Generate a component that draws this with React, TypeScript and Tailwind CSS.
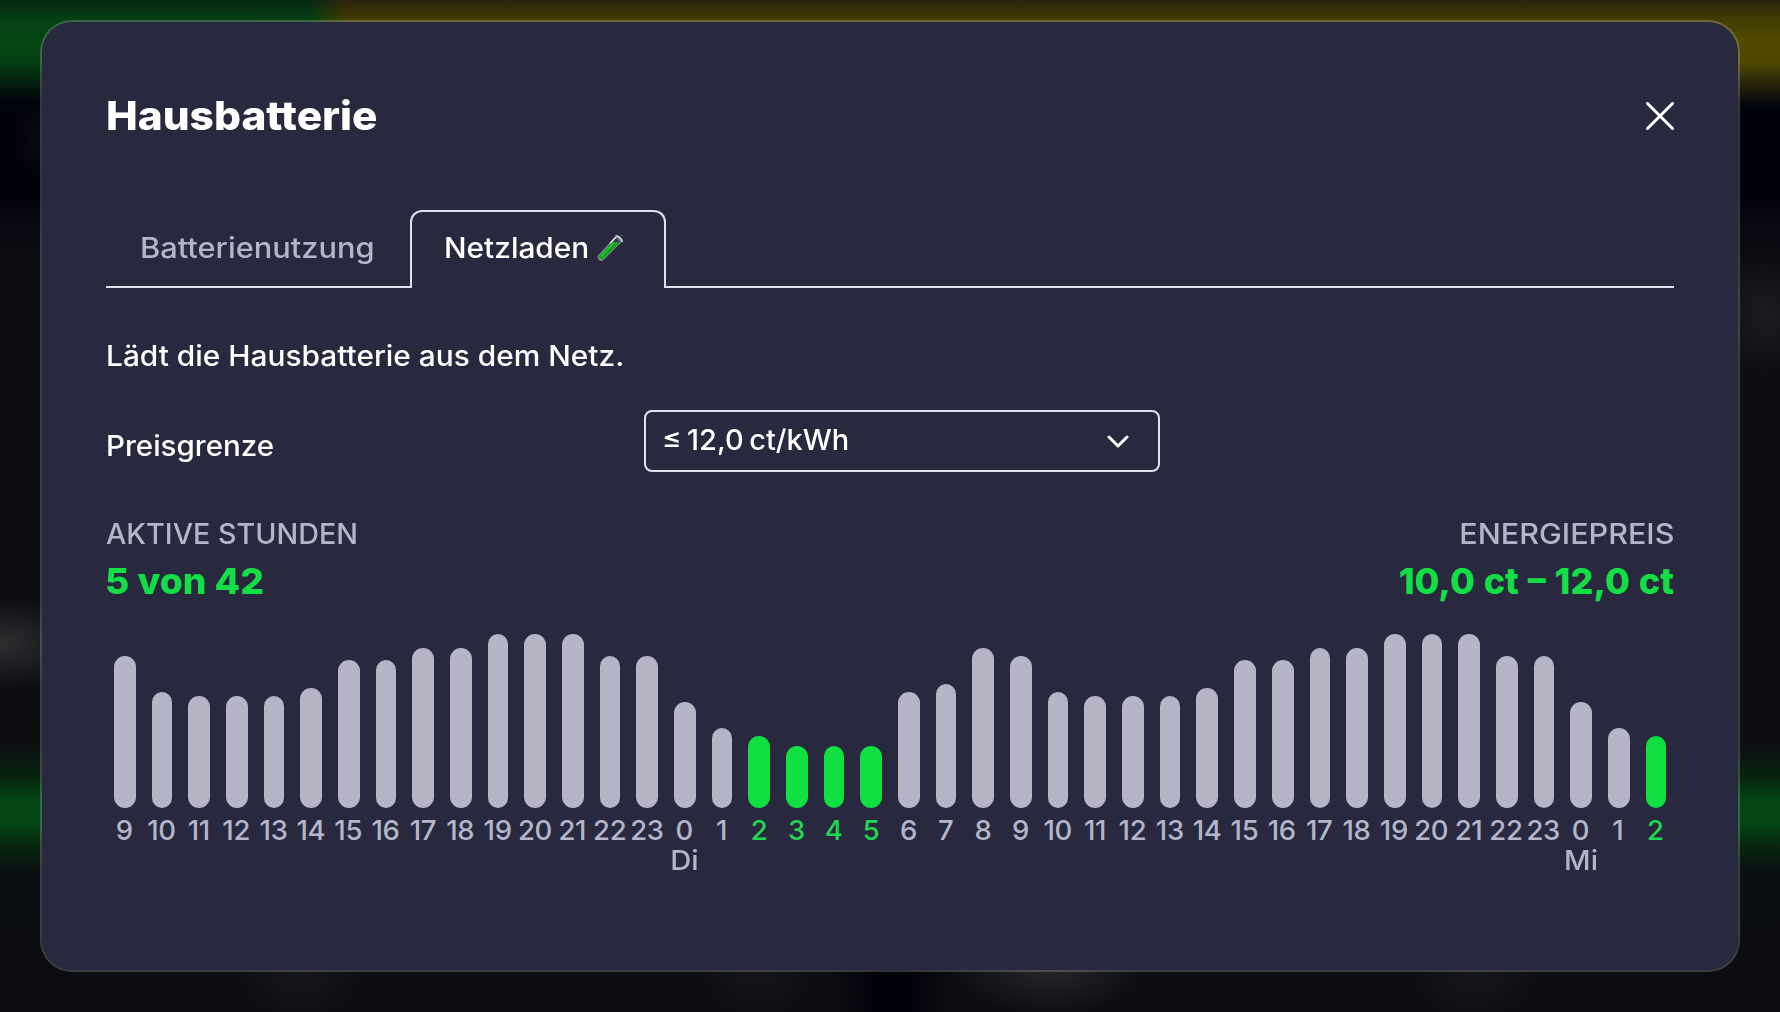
type Slot = { hour: number; height: number; active?: boolean; day?: string };

const COLUMN_WIDTH = 37.34375;

const day = [
  { hour: 9, height: 152 },
  { hour: 10, height: 116 },
  { hour: 11, height: 112 },
  { hour: 12, height: 112 },
  { hour: 13, height: 112 },
  { hour: 14, height: 120 },
  { hour: 15, height: 148 },
  { hour: 16, height: 148 },
  { hour: 17, height: 160 },
  { hour: 18, height: 160 },
  { hour: 19, height: 174 },
  { hour: 20, height: 174 },
  { hour: 21, height: 174 },
  { hour: 22, height: 152 },
  { hour: 23, height: 152 },
];

const slots: Slot[] = [
  ...day,
  { hour: 0, height: 106, day: "Di" },
  { hour: 1, height: 80 },
  { hour: 2, height: 72, active: true },
  { hour: 3, height: 62, active: true },
  { hour: 4, height: 62, active: true },
  { hour: 5, height: 62, active: true },
  { hour: 6, height: 116 },
  { hour: 7, height: 124 },
  { hour: 8, height: 160 },
  ...day,
  { hour: 0, height: 106, day: "Mi" },
  { hour: 1, height: 80 },
  { hour: 2, height: 72, active: true },
];

// Bars snap to a 2px grid so that their edges stay crisp.
const snap = (v: number) => Math.round(v / 2) * 2;

function barBox(i: number) {
  const left = snap(i * COLUMN_WIDTH + 8);
  const right = snap((i + 1) * COLUMN_WIDTH - 8);
  return { marginLeft: left - i * COLUMN_WIDTH, width: right - left };
}

function TestTube() {
  return (
    <svg width="28" height="28" viewBox="0 0 28 28" fill="none">
      <path d="M19 2 25 7.4 7 25.6a3.6 3.6 0 0 1-5.2-5Z" fill="#7f8f8c" />
      <path d="M19.4 4 23.4 7.6 6.4 24.4a2.3 2.3 0 0 1-3.4-3.2Z" fill="#3a3d48" />
      <path d="M15.6 8h7.2L6.4 24.4a2.3 2.3 0 0 1-3.4-3.2Z" fill="#0ea816" />
      <path d="M16 9.4 4.4 21.8" stroke="#2fd03c" strokeWidth="1.2" strokeLinecap="round" />
      <path d="M19.2 1.8c2.4.6 5 2.8 6 5.4" stroke="#c9ced8" strokeWidth="1.8" strokeLinecap="round" />
      <path d="m18.4 3.4-5 5.6" stroke="#eceef4" strokeWidth="1.3" strokeLinecap="round" />
      <path d="m23.6.8 2.2 1.2" stroke="#1f6b34" strokeWidth="1.2" strokeLinecap="round" />
    </svg>
  );
}

function Header() {
  return (
    <header className="flex h-12 items-center justify-between">
      <h1 className="origin-left scale-x-[1.06] text-[40px] leading-[48px] font-extrabold">Hausbatterie</h1>
      <button aria-label="Schließen">
        <svg width="28" height="28" viewBox="0 0 28 28" fill="none" stroke="#fff" strokeWidth="3" strokeLinecap="round">
          <path d="M1.5 1.5 26.5 26.5M26.5 1.5 1.5 26.5" />
        </svg>
      </button>
    </header>
  );
}

function Tabs() {
  return (
    <nav className="mt-[70px] flex h-[78px] text-[28px] leading-10 font-medium">
      <button className="w-[304px] border-b-2 border-[#e0e1ee] pl-[34px] text-left whitespace-nowrap text-[#b4b5c9]">
        <span className="inline-block origin-left scale-x-[1.1]">Batterienutzung</span>
      </button>
      <button className="flex w-64 items-center rounded-t-xl border-2 border-b-0 border-[#e0e1ee] pb-1 pl-8 text-left">
        <span className="w-[153px]">
          <span className="inline-block origin-left scale-x-[1.065]">Netzladen</span>
        </span>
        <TestTube />
      </button>
      <div className="flex-1 border-b-2 border-[#e0e1ee]" />
    </nav>
  );
}

function PriceLimit() {
  return (
    <div className="mt-[34px] flex h-[62px] font-medium">
      <div className="w-[538px] pt-4">
        <span className="inline-block origin-left scale-x-[1.055]">Preisgrenze</span>
      </div>
      <button className="flex w-[516px] items-center justify-between rounded-lg border-2 border-[#e0e1ee] pr-[29px] pb-[2px] pl-4">
        <span className="origin-left scale-x-[1.035] [word-spacing:-2px]">≤ 12,0 ct/kWh</span>
        <svg
          className="mt-1"
          width="22"
          height="14"
          viewBox="0 0 22 14"
          fill="none"
          stroke="#fff"
          strokeWidth="3"
          strokeLinecap="round"
          strokeLinejoin="round"
        >
          <path d="m2 2 9 9 9-9" />
        </svg>
      </button>
    </div>
  );
}

function Summary() {
  return (
    <div className="mt-[42px] flex justify-between">
      <div>
        <div className="origin-left scale-x-[1.025] text-[#b4b5c9]">AKTIVE STUNDEN</div>
        <div className="mt-[3px] -ml-px origin-left scale-x-[1.035] text-4xl leading-[48px] font-extrabold text-[#14de45]">
          5 von 42
        </div>
      </div>
      <div className="text-right">
        <div className="origin-right scale-x-[1.09] text-[#b4b5c9]">ENERGIEPREIS</div>
        <div className="mt-[3px] text-4xl leading-[48px] font-extrabold text-[#14de45] [word-spacing:1px]">
          10,0 ct – 12,0 ct
        </div>
      </div>
    </div>
  );
}

function Chart() {
  return (
    <div className="mt-[29px] grid grid-cols-[repeat(42,37.34375px)]">
      {slots.map((s, i) => (
        <div key={i} className={s.active ? "text-[#22d654]" : "text-[#b4b5c9]"}>
          <div className="flex h-[174px] items-end">
            <div
              className={s.active ? "rounded-full bg-[#10e042]" : "rounded-full bg-[#b5b5c5]"}
              style={{ ...barBox(i), height: s.height }}
            />
          </div>
          <div className="mt-[7px] flex flex-col items-center text-[27.5px] leading-[30px] tracking-[-0.3px] whitespace-nowrap">
            <span className="-ml-px">{s.hour}</span>
            {s.day && <span className="scale-x-[1.06] tracking-normal">{s.day}</span>}
          </div>
        </div>
      ))}
    </div>
  );
}

const backdrop = [
  "radial-gradient(90px 46px at 0px 643px, #2e2e30 0%, rgba(38,39,42,0.7) 45%, transparent 100%)",
  "radial-gradient(55px 60px at 1765px 315px, #1b1c1f 0%, transparent 100%)",
  "radial-gradient(36px 40px at 45px 140px, #0a0b14 0%, transparent 100%)",
  "radial-gradient(68px 60px at 300px 966px, #161719 0%, #121318 50%, transparent 100%)",
  "radial-gradient(65px 60px at 758px 966px, #15161a 0%, #111217 50%, transparent 100%)",
  "radial-gradient(100px 56px at 1050px 962px, #29292b 0%, #1a1b1e 50%, transparent 100%)",
  "radial-gradient(70px 60px at 1475px 966px, #161719 0%, #121318 50%, transparent 100%)",
  "linear-gradient(90deg, transparent 835px, #01010a 880px, #01010a 905px, transparent 950px) 0 900px / 100% 112px no-repeat",
  "linear-gradient(180deg, #052711 0, #054014 20px, #044613 42px, #044012 62px, #03220f 80px, #02050c 100px, #01010a 120px, #01010b 195px, #0a0b12 230px, #0d0e13 270px, #0d0e12 745px, #07220f 775px, #044513 800px, #044713 822px, #07250f 847px, #0b0e13 872px, #0c0d12 1012px)",
].join(", ");

export default function App() {
  return (
    <div
      className="relative h-[1012px] w-[1780px] overflow-hidden px-10 pt-5 font-['Inter','Liberation_Sans',sans-serif] text-white"
      style={{ background: backdrop }}
    >
      <div className="absolute inset-x-0 top-0 h-[106px] bg-[linear-gradient(180deg,#29240a_0,#433e03_20px,#514a00_42px,#4f4900_62px,#27240a_84px,#04040e_106px)] [mask-image:linear-gradient(90deg,transparent_308px,black_345px)]" />
      <main className="relative h-[952px] rounded-[32px] border-2 border-white/20 bg-[#28293e] bg-clip-padding px-16 pt-[70px] text-[28px] leading-10 font-medium">
        <Header />
        <Tabs />
        <p className="mt-12">
          <span className="inline-block origin-left scale-x-[1.066]">Lädt die Hausbatterie aus dem Netz.</span>
        </p>
        <PriceLimit />
        <Summary />
        <Chart />
      </main>
    </div>
  );
}
